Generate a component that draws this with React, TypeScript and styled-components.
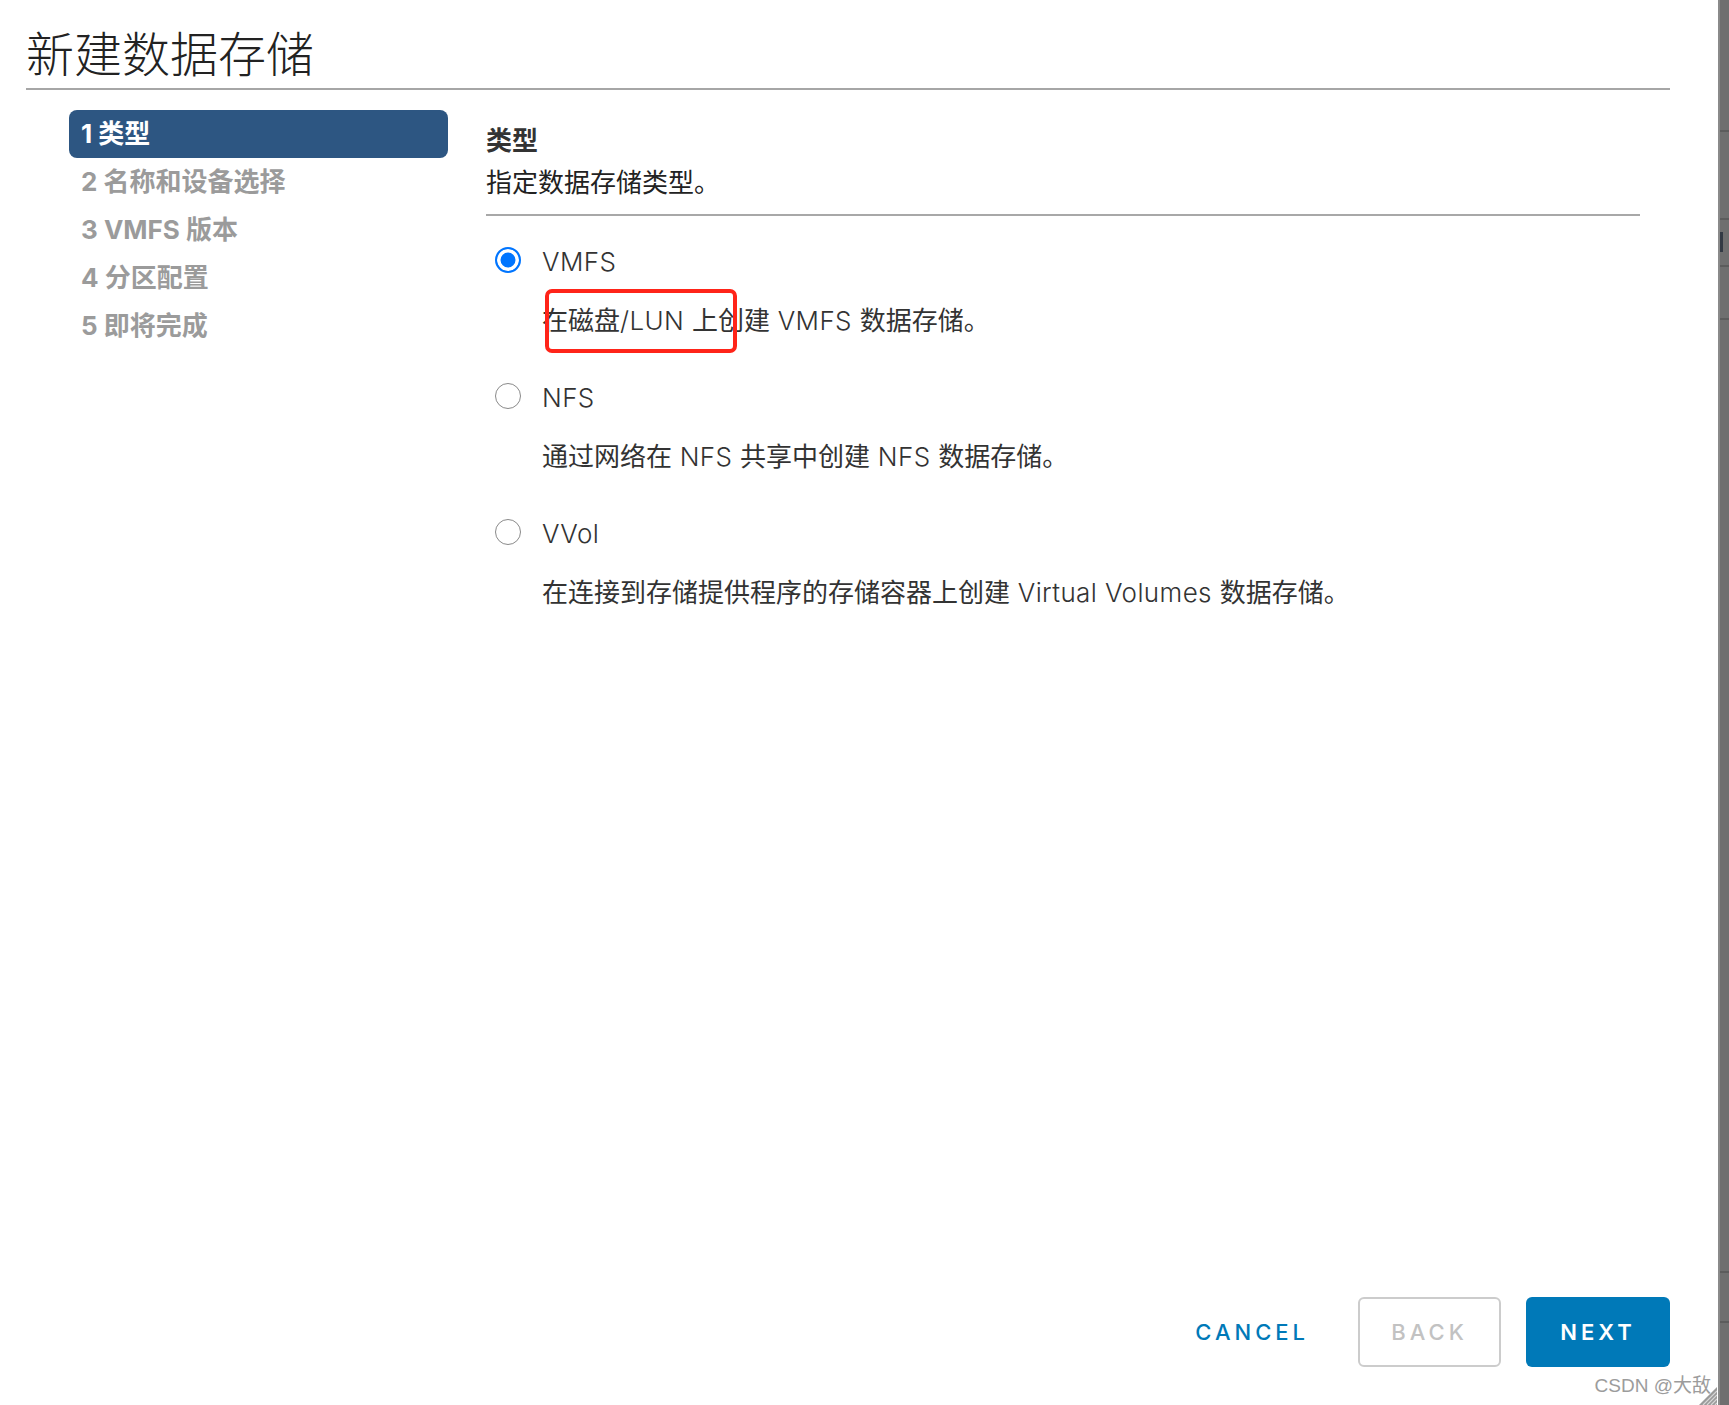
import React from 'react';
import styled, { createGlobalStyle } from 'styled-components';

const GlobalStyle = createGlobalStyle`
  html, body {
    margin: 0;
    padding: 0;
    background: #fff;
  }
  body {
    font-family: "Inter", "Noto Sans CJK SC", sans-serif;
    color: #333;
  }
`;

const steps = ['1 类型', '2 名称和设备选择', '3 VMFS 版本', '4 分区配置', '5 即将完成'];

const options = [
  { key: 'vmfs', label: 'VMFS', desc: '在磁盘/LUN 上创建 VMFS 数据存储。', marked: true },
  { key: 'nfs', label: 'NFS', desc: '通过网络在 NFS 共享中创建 NFS 数据存储。' },
  { key: 'vvol', label: 'VVol', desc: '在连接到存储提供程序的存储容器上创建 Virtual Volumes 数据存储。' },
];

// latin runs get the lighter weight, CJK stays regular
const mixed = (text: string) =>
  text.split(/([\x20-\x7e]+)/).map((part, i) =>
    /^[\x20-\x7e]+$/.test(part) ? <Latin key={i}>{part}</Latin> : part
  );

export default function App() {
  return (
    <>
      <GlobalStyle />
      <Page>
        <Modal>
          <Header>
            <Title>新建数据存储</Title>
          </Header>
          <Body>
            <Steps>
              {steps.map((s, i) => (
                <Step key={s} active={i === 0}>{s}</Step>
              ))}
            </Steps>
            <Content>
              <Heading>类型</Heading>
              <Subtitle>指定数据存储类型。</Subtitle>
              <Options>
                {options.map((o, i) => (
                  <Option key={o.key}>
                    <RadioRow>
                      <Radio type="radio" name="type" defaultChecked={i === 0} />
                      <Latin>{o.label}</Latin>
                    </RadioRow>
                    <Description>
                      {mixed(o.desc)}
                      {o.marked && <Marker />}
                    </Description>
                  </Option>
                ))}
              </Options>
            </Content>
          </Body>
          <Footer>
            <LinkButton>CANCEL</LinkButton>
            <OutlineButton disabled>BACK</OutlineButton>
            <PrimaryButton>NEXT</PrimaryButton>
          </Footer>
          <Watermark>
            CSDN @大敌
            <Grip width="20" height="20" viewBox="0 0 20 20">
              <path d="M20 2 L20 20 L2 20 Z" fill="#9a9a9a" />
              <path d="M20 6 L6 20 M20 10 L10 20 M20 14 L14 20 M20 18 L18 20" stroke="#d8d8d8" strokeWidth="1.2" />
            </Grip>
          </Watermark>
        </Modal>
        <Backdrop>
          <BackdropRow h={132} />
          <BackdropRow h={88} />
          <BackdropRow h={47}><Tick /></BackdropRow>
          <BackdropRow h={53} />
          <BackdropRow h={953} />
          <BackdropRow h={50} />
        </Backdrop>
      </Page>
    </>
  );
}

const Page = styled.div`
  display: flex;
  width: 1729px;
  height: 1405px;
  overflow: hidden;
`;

const Modal = styled.div`
  position: relative;
  flex: 1;
  display: flex;
  flex-direction: column;
  padding: 0 48px 38px 26px;
  background: #fff;
`;

const Header = styled.div`
  padding-top: 23px;
  padding-bottom: 9px;
  border-bottom: 2px solid #a6a6a6;
`;

const Title = styled.h1`
  margin: 0;
  font-family: "Noto Sans CJK SC", sans-serif;
  font-size: 48px;
  line-height: 56px;
  font-weight: 300;
  color: #222;
`;

const Body = styled.div`
  flex: 1;
  display: flex;
  padding-top: 20px;
`;

const Steps = styled.ul`
  list-style: none;
  margin: 0 0 0 43px;
  padding: 0;
  width: 379px;
  flex-shrink: 0;
`;

const Step = styled.li<{ active?: boolean }>`
  height: 48px;
  line-height: 48px;
  padding-left: 12px;
  border-radius: 8px;
  font-size: 26px;
  font-weight: 700;
  color: ${(p) => (p.active ? '#fff' : '#9b9b9b')};
  background: ${(p) => (p.active ? '#2d5682' : 'transparent')};
`;

const Content = styled.div`
  flex: 1;
  margin: 0 30px 0 38px;
  padding-top: 15px;
`;

const Heading = styled.div`
  font-size: 26px;
  line-height: 32px;
  font-weight: 700;
  color: #333;
`;

const Subtitle = styled.div`
  margin-top: 10px;
  padding-bottom: 15px;
  border-bottom: 2px solid #a8a8a8;
  font-size: 26px;
  line-height: 32px;
  color: #222;
`;

const Options = styled.div`
  display: flex;
  flex-direction: column;
  gap: 44px;
  margin-top: 29px;
`;

const Option = styled.div`
  display: flex;
  flex-direction: column;
  gap: 28px;
`;

const RadioRow = styled.label`
  display: flex;
  align-items: center;
  gap: 21px;
  height: 32px;
  padding-left: 9px;
  font-size: 26px;
  color: #333;
`;

const Radio = styled.input`
  appearance: none;
  margin: 0 0 2px;
  width: 26px;
  height: 26px;
  border-radius: 50%;
  border: 1.5px solid #8a8a8a;
  background: #fff;
  box-sizing: border-box;

  &:checked {
    border: 2px solid #0075ff;
    background: #0075ff;
    box-shadow: inset 0 0 0 3.5px #fff;
  }
`;

const Latin = styled.span`
  font-weight: 300;
  letter-spacing: 0.4px;
`;

const Description = styled.div`
  position: relative;
  align-self: flex-start;
  padding-left: 56px;
  font-size: 26px;
  line-height: 32px;
  color: #333;
`;

const Marker = styled.span`
  position: absolute;
  left: 59px;
  top: -16px;
  width: 192px;
  height: 64px;
  box-sizing: border-box;
  border: 4px solid #ff2419;
  border-radius: 7px;
`;

const Footer = styled.div`
  display: flex;
  justify-content: flex-end;
  align-items: center;
  gap: 25px;
`;

const ButtonBase = styled.button`
  height: 70px;
  margin: 0;
  border-radius: 6px;
  box-sizing: border-box;
  font-family: "Inter", sans-serif;
  font-size: 22px;
  font-weight: 500;
  letter-spacing: 4px;
  cursor: pointer;
`;

const LinkButton = styled(ButtonBase)`
  padding: 0 24px;
  border: none;
  background: transparent;
  color: #0079b8;
`;

const OutlineButton = styled(ButtonBase)`
  width: 143px;
  border: 2px solid #cccccc;
  background: #fff;
  color: #c2c2c2;
  cursor: default;
`;

const PrimaryButton = styled(ButtonBase)`
  width: 144px;
  border: none;
  background: #0079b8;
  color: #fff;
  font-weight: 600;
`;

const Watermark = styled.div`
  position: absolute;
  right: 7px;
  bottom: 7px;
  font-family: "Liberation Sans", "Noto Sans CJK SC", sans-serif;
  font-size: 19px;
  line-height: 24px;
  color: #9c9c9c;
`;

const Grip = styled.svg`
  position: absolute;
  right: -6px;
  bottom: -7px;
`;

const Backdrop = styled.div`
  width: 11px;
  flex-shrink: 0;
  display: flex;
  flex-direction: column;
  background: #6f6f6f;
  border-left: 2px solid #8a8a8a;
  box-sizing: border-box;
`;

const BackdropRow = styled.div<{ h: number }>`
  height: ${(p) => p.h}px;
  flex-shrink: 0;
  border-bottom: 2px solid #5c5c5c;
  box-sizing: border-box;
  padding-top: 12px;
`;

const Tick = styled.div`
  width: 3px;
  height: 20px;
  background: #333a44;
`;
